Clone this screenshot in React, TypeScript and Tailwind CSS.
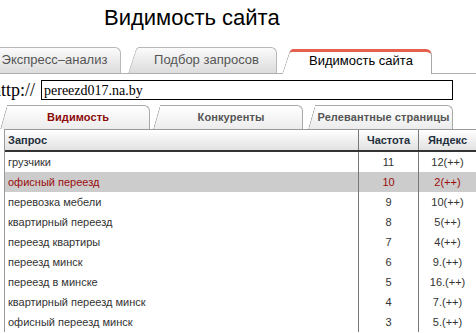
import React from "react";

const rows: [string, string, string][] = [
  ["грузчики", "11", "12(++)"],
  ["офисный переезд", "10", "2(++)"],
  ["перевозка мебели", "9", "10(++)"],
  ["квартирный переезд", "8", "5(++)"],
  ["переезд квартиры", "7", "4(++)"],
  ["переезд минск", "6", "9.(++)"],
  ["переезд в минске", "5", "16.(++)"],
  ["квартирный переезд минск", "4", "7.(++)"],
  ["офисный переезд минск", "3", "5.(++)"],
];

function TopTab({
  label,
  active,
  className,
}: {
  label: string;
  active?: boolean;
  className: string;
}) {
  return (
    <div className={`relative shrink-0 ${className}`}>
      {/* slanted left edge */}
      <div
        className={
          active
            ? "absolute left-0 top-0 bottom-0 w-[22px] origin-bottom-left skew-x-[-18deg] rounded-tl-[4px] bg-white border-l border-l-[#a8a8a8] border-t-[3px] border-t-[#e4604f]"
            : "absolute left-0 top-0 bottom-0 w-[22px] origin-bottom-left skew-x-[-18deg] rounded-tl-[4px] bg-gradient-to-b from-[#fbfbfb] to-[#dcdcdc] border-l border-t border-[#b8b8b8]"
        }
      />
      <div
        className={
          active
            ? "absolute left-[10px] top-0 bottom-0 right-0 rounded-tr-[6px] bg-white border-r border-r-[#a8a8a8] border-t-[3px] border-t-[#e4604f]"
            : "absolute left-[10px] top-0 bottom-0 right-0 rounded-tr-[6px] bg-gradient-to-b from-[#fbfbfb] to-[#dcdcdc] border-r border-t border-[#b8b8b8]"
        }
      />
      <div
        className={`relative flex h-full items-center justify-center pl-[8px] text-[13px] ${
          active ? "text-black pb-[2px]" : "text-[#555]"
        }`}
      >
        {label}
      </div>
    </div>
  );
}

function SubTab({
  label,
  active,
  className,
}: {
  label: string;
  active?: boolean;
  className: string;
}) {
  return (
    <div className={`relative shrink-0 h-[24px] ${className}`}>
      <div className="absolute left-0 top-0 bottom-0 w-[20px] origin-bottom-left skew-x-[-16deg] rounded-tl-[4px] bg-gradient-to-b from-white to-[#ececec] border-l border-t border-[#a8a8a8]" />
      <div className="absolute left-[7px] top-0 bottom-0 right-0 rounded-tr-[6px] bg-gradient-to-b from-white to-[#ececec] border-r border-t border-[#a8a8a8]" />
      <div
        className={`relative flex h-full items-center justify-center pl-[6px] text-[11px] font-bold tracking-[0.1px] ${
          active ? "text-[#8c0a0a]" : "text-[#555]"
        }`}
      >
        {label}
      </div>
    </div>
  );
}

export default function App() {
  return (
    <div
      className="w-[476px] h-[333px] overflow-hidden bg-white"
      style={{ fontFamily: '"Liberation Sans", Arial, sans-serif' }}
    >
      <div className="h-[47px] pt-[5px] pl-[104px] text-[22px] leading-[25px] text-black">
        Видимость сайта
      </div>

      <div className="flex h-[27px] items-end border-b border-[#b0b0b0]">
        <TopTab label="Экспресс–анализ" className="h-[26px] w-[141px] ml-[-20px]" />
        <TopTab label="Подбор запросов" className="h-[26px] w-[149px] ml-[7px]" />
        <TopTab label="Видимость сайта" active className="h-[25px] w-[150px] ml-[5px] -mb-px z-10" />
      </div>

      <div className="mt-[6px] flex h-[20px] items-center font-['Liberation_Serif',serif]">
        <span className="ml-[-8px] w-[49px] shrink-0 text-[18px] leading-[20px] text-black">http://</span>
        <div className="flex h-[20px] w-[412px] items-center border border-black px-[2px] text-[14px] text-black">
          pereezd017.na.by
        </div>
      </div>

      <div className="mt-[5px] flex h-[24px] items-end">
        <SubTab label="Видимость" active className="w-[150px] ml-[0px]" />
        <SubTab label="Конкуренты" className="w-[150px] ml-[3px]" />
        <SubTab label="Релевантные страницы" className="w-[145px] ml-[5px]" />
      </div>

      <div className="ml-[4px] w-[472px] border-l border-t border-[#999] text-[11px]">
        <div className="grid h-[22px] grid-cols-[353px_60px_58px] border-b-2 border-[#333] bg-gradient-to-b from-white to-[#e2e2e2] font-bold text-[#1f2f3c]">
          <div className="flex items-center pl-[3px]">Запрос</div>
          <div className="flex items-center justify-center border-l border-[#777]">Частота</div>
          <div className="flex items-center justify-center border-l border-[#777]">Яндекс</div>
        </div>
        {rows.map(([q, f, y], i) => {
          const hl = i === 1;
          return (
            <div
              key={q}
              className={`grid h-[20px] grid-cols-[353px_60px_58px] ${
                hl ? "bg-[#cccccc] text-[#9a0b0b]" : "text-[#333]"
              }`}
            >
              <div className="flex items-center pl-[3px]">{q}</div>
              <div className="flex items-center justify-center border-l border-[#777]">{f}</div>
              <div className="flex items-center justify-center border-l border-[#777]">{y}</div>
            </div>
          );
        })}
      </div>
    </div>
  );
}
